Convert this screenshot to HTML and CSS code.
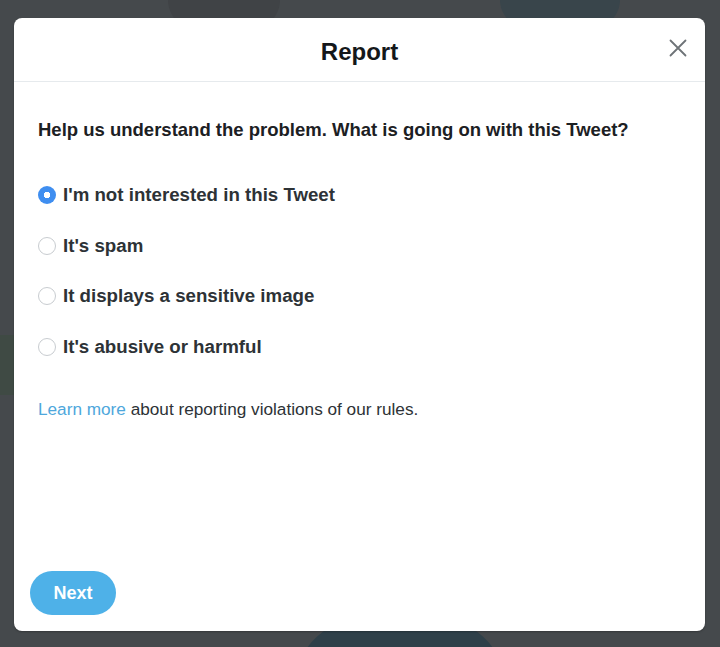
FILE: index.html
```html
<!DOCTYPE html>
<html lang="en">
<head>
<meta charset="utf-8">
<title>Report</title>
<link rel="stylesheet" href="styles.css">
</head>
<body>
<div class="backdrop">
  <div class="blob blob-a"></div>
  <div class="blob blob-b"></div>
  <div class="blob blob-c"></div>
  <div class="blob blob-d"></div>
  <div class="modal">
    <header class="modal-header">
      <h1 class="modal-title">Report</h1>
      <button class="close" aria-label="Close">
        <svg width="18" height="18" viewBox="0 0 18 18"><path d="M1.5 1.5 L16.5 16.5 M16.5 1.5 L1.5 16.5" stroke="#6e7377" stroke-width="1.8" stroke-linecap="round" fill="none"/></svg>
      </button>
    </header>
    <main class="modal-body">
      <p class="question">Help us understand the problem. What is going on with this Tweet?</p>
      <ul class="options">
        <li class="option"><span class="radio checked"></span><span>I'm not interested in this Tweet</span></li>
        <li class="option"><span class="radio"></span><span>It's spam</span></li>
        <li class="option"><span class="radio"></span><span>It displays a sensitive image</span></li>
        <li class="option"><span class="radio"></span><span>It's abusive or harmful</span></li>
      </ul>
      <p class="learn"><a class="link" href="#">Learn more</a> about reporting violations of our rules.</p>
    </main>
    <footer class="modal-footer">
      <button class="next">Next</button>
    </footer>
  </div>
</div>
</body>
</html>
```
FILE: styles.css
```css
* { box-sizing: border-box; }
html, body { margin: 0; padding: 0; }
body {
  width: 720px;
  height: 647px;
  overflow: hidden;
  background: #45494c;
  font-family: "Liberation Sans", Arial, sans-serif;
}
.backdrop {
  position: relative;
  width: 720px;
  height: 647px;
  overflow: hidden;
  padding: 18px 15px 16px 14px;
  display: flex;
}
.blob {
  position: absolute;
  border-radius: 50%;
}
.blob-a { left: 168px; top: -40px; width: 112px; height: 80px; background: #404346; }
.blob-b { left: 500px; top: -40px; width: 120px; height: 80px; background: #39454b; }
.blob-c { left: 300px; top: 610px; width: 200px; height: 120px; background: #2f4049; }
.blob-d { left: 0; top: 335px; width: 14px; height: 60px; border-radius: 0; background: #3f4a44; }
.modal {
  position: relative;
  flex: 1;
  background: #fff;
  border-radius: 8px;
  display: flex;
  flex-direction: column;
  box-shadow: 0 1px 2px rgba(0,0,0,0.25);
}
.modal-header {
  height: 64px;
  padding-top: 4px;
  border-bottom: 1px solid #e6eaed;
  display: flex;
  align-items: center;
  justify-content: center;
  position: relative;
}
.modal-title {
  margin: 0;
  font-size: 24px;
  font-weight: 700;
  color: #14171a;
}
.close {
  position: absolute;
  right: 18px;
  top: 21px;
  width: 18px;
  height: 18px;
  padding: 0;
  border: 0;
  background: none;
  display: flex;
}
.modal-body {
  flex: 1;
  padding: 38px 24px 0;
}
.question {
  margin: 0;
  font-size: 18.5px;
  font-weight: 700;
  color: #1c2023;
  line-height: 20px;
}
.options {
  list-style: none;
  margin: 45px 0 0;
  padding: 0;
  display: flex;
  flex-direction: column;
  gap: 30.5px;
}
.option {
  display: flex;
  align-items: center;
  gap: 7px;
  height: 20px;
  font-size: 18.7px;
  font-weight: 700;
  color: #2d3236;
}
.radio {
  width: 18px;
  height: 18px;
  border-radius: 50%;
  border: 1px solid #c8ccd0;
  background: #fff;
  flex: none;
}
.radio.checked {
  border: 0;
  background: radial-gradient(circle, #fff 0 3px, #3f8ef0 3.5px);
}
.learn {
  margin: 42px 0 0;
  font-size: 17.2px;
  color: #2d3236;
  line-height: 20px;
}
.link {
  color: #4ea7dc;
  text-decoration: none;
}
.modal-footer {
  padding: 0 0 16px 16px;
}
.next {
  width: 86px;
  height: 44px;
  border: 0;
  border-radius: 22px;
  background: #4eb1e8;
  color: #fff;
  font-family: "Liberation Sans", Arial, sans-serif;
  font-size: 18px;
  font-weight: 700;
  padding: 0;
}
```
